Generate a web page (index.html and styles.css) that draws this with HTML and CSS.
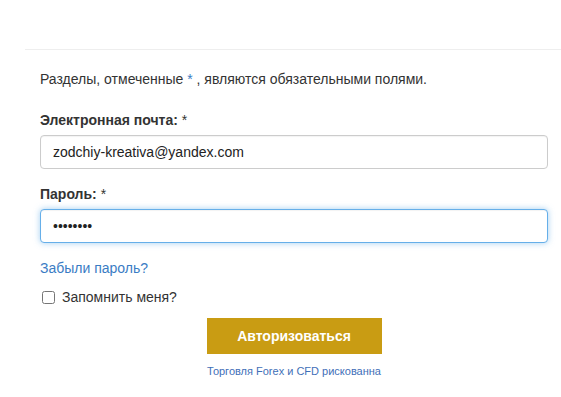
FILE: index.html
```html
<!DOCTYPE html>
<html lang="ru">
<head>
    <meta charset="UTF-8">
    <meta name="viewport" content="width=device-width, initial-scale=1.0">
    <title>Вход</title>
    <link rel="stylesheet" href="styles.css">
</head>
<body>

    <div class="login-panel">
        <form class="login-form">
            <p class="form-note">Разделы, отмеченные <span class="req">*</span> , являются обязательными полями.</p>

            <div class="field">
                <label for="email">Электронная почта: <span class="star">*</span></label>
                <input type="text" id="email" class="input" value="zodchiy-kreativa@yandex.com">
            </div>

            <div class="field">
                <label for="password">Пароль: <span class="star">*</span></label>
                <input type="password" id="password" class="input input-focus" value="........">
            </div>

            <a href="#" class="forgot-link">Забыли пароль?</a>

            <label class="remember">
                <input type="checkbox" class="remember-box">
                <span>Запомнить меня?</span>
            </label>

            <div class="actions">
                <button type="submit" class="submit-button">Авторизоваться</button>
                <a href="#" class="risk-link">Торговля Forex и CFD рискованна</a>
            </div>
        </form>
    </div>

</body>
</html>
```

FILE: styles.css
```css
:root {
    --text-color: #333333;
    --link-color: #3a7cc4;
    --border-color: #cccccc;
    --focus-color: #66afe9;
    --gold: #c99c13;
}

body {
    margin: 0;
    padding: 0;
    background: #ffffff;
    color: var(--text-color);
    font-family: "Liberation Sans", Arial, sans-serif;
    font-size: 14px;
    line-height: 20px;
}

.login-panel {
    margin: 49px 0 0 25px;
    border-top: 1px solid #eeeeee;
}

.login-form {
    padding: 19px 13px 20px 15px;
    display: flex;
    flex-direction: column;
}

.form-note {
    margin: 0;
}

.req {
    color: var(--link-color);
}

.field {
    display: flex;
    flex-direction: column;
    margin-top: 21px;
}

.field + .field {
    margin-top: 15px;
}

.field label {
    font-weight: bold;
    margin-bottom: 5px;
}

.star {
    font-weight: normal;
}

.input {
    box-sizing: border-box;
    height: 34px;
    padding: 6px 12px;
    border: 1px solid var(--border-color);
    border-radius: 4px;
    font-family: "Liberation Sans", Arial, sans-serif;
    font-size: 14px;
    color: #222222;
    outline: none;
    box-shadow: inset 0 1px 1px rgba(0, 0, 0, 0.05);
}

.input-focus {
    border-color: var(--focus-color);
    box-shadow: inset 0 1px 1px rgba(0, 0, 0, 0.05), 0 0 6px rgba(102, 175, 233, 0.6);
}

.forgot-link {
    margin-top: 15px;
    align-self: flex-start;
    color: var(--link-color);
    text-decoration: none;
}

.remember {
    margin-top: 9px;
    display: flex;
    align-items: center;
    gap: 7px;
}

.remember-box {
    width: 13px;
    height: 13px;
    margin: 0 0 0 2px;
}

.actions {
    margin-top: 11px;
    display: flex;
    flex-direction: column;
    align-items: center;
}

.submit-button {
    width: 175px;
    height: 36px;
    border: none;
    border-radius: 0;
    background: var(--gold);
    color: #ffffff;
    font-family: "Liberation Sans", Arial, sans-serif;
    font-size: 14px;
    font-weight: bold;
    cursor: pointer;
}

.risk-link {
    margin-top: 10px;
    font-size: 11px;
    line-height: 14px;
    color: #3f6fb8;
    text-decoration: none;
}
```
